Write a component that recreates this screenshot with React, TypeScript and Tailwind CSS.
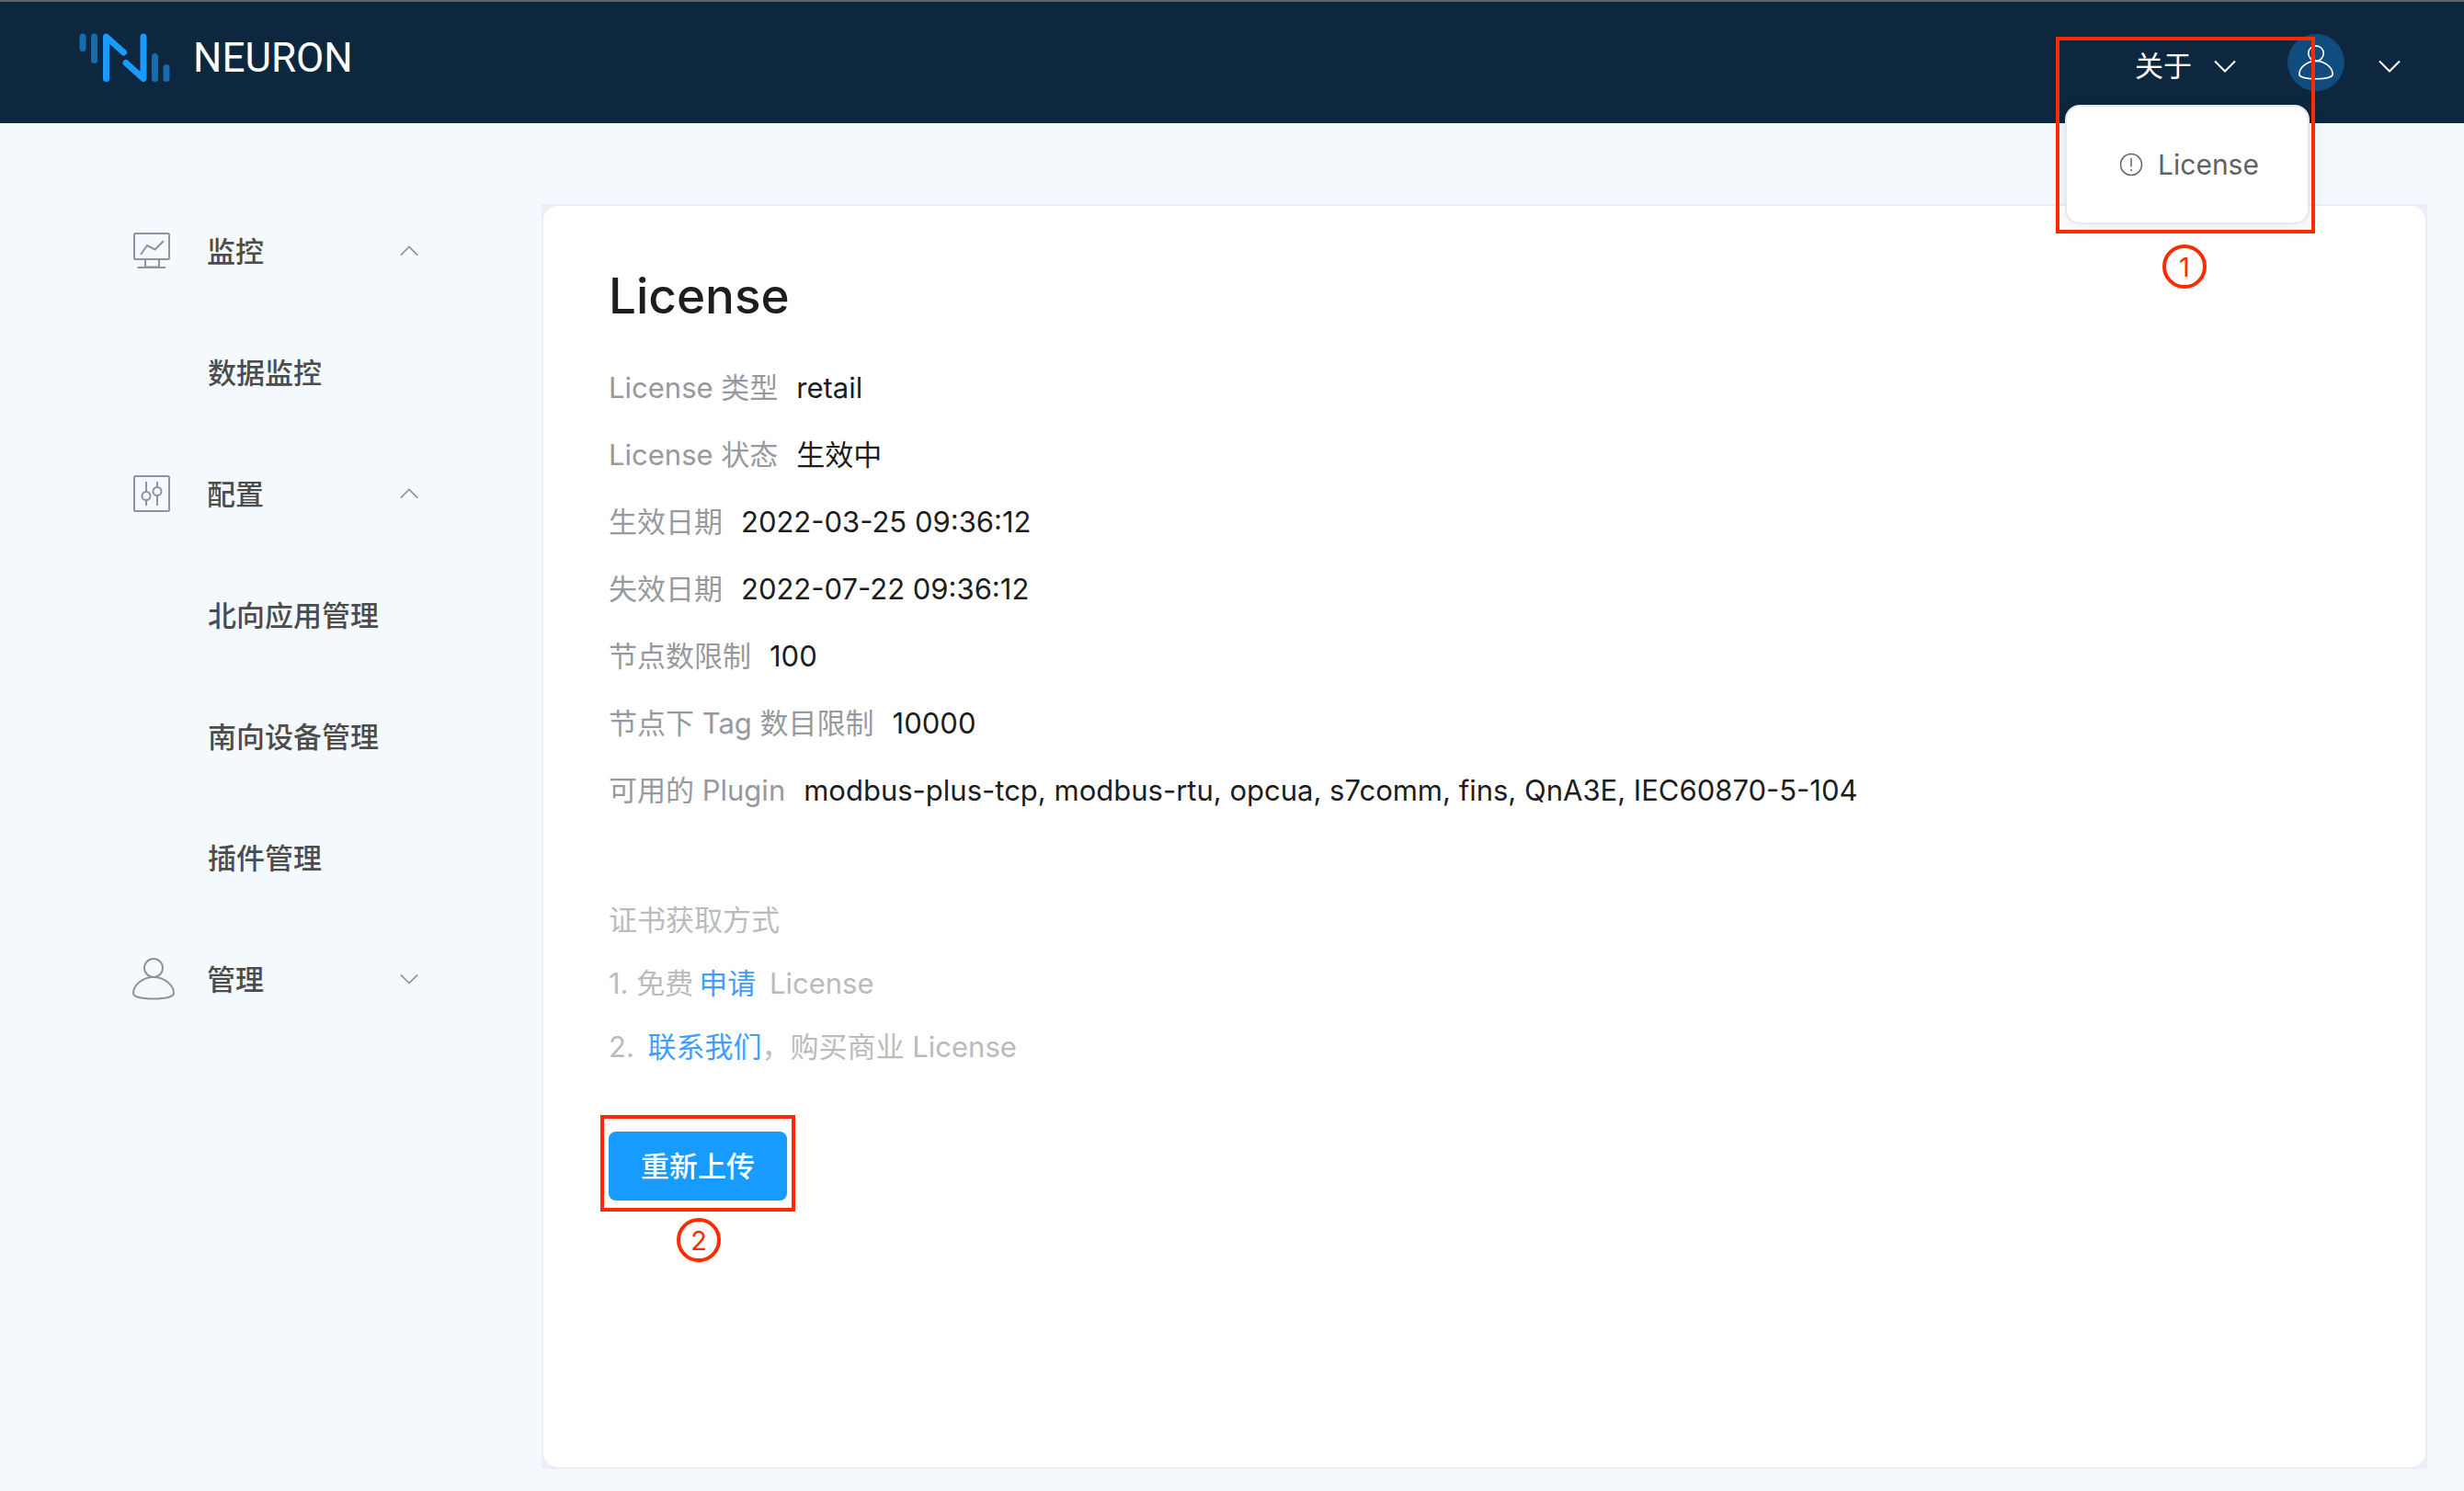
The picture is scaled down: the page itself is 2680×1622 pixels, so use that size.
import type { ReactNode } from "react";

function Chevron({ up = false, className }: { up?: boolean; className: string }) {
  return (
    <svg viewBox="0 0 24 14" fill="none" stroke="currentColor" strokeWidth="2" className={className} aria-hidden="true">
      <path d={up ? "M1 12.5 12 1.5 23 12.5" : "M1 1.5 12 12.5 23 1.5"} />
    </svg>
  );
}

function UserIcon({ className }: { className: string }) {
  return (
    <svg viewBox="0 0 46 46" fill="none" stroke="currentColor" strokeWidth="2" className={className} aria-hidden="true">
      <circle cx="23" cy="11" r="10" />
      <path d="M23 21C35 21 45 30 45 38.500C45 42.500 35 44.500 23 44.500S1 42.500 1 38.500C1 30 11 21 23 21Z" />
    </svg>
  );
}

function MonitorIcon({ className }: { className: string }) {
  return (
    <svg viewBox="0 0 42 42" fill="none" stroke="currentColor" strokeWidth="2" className={className} aria-hidden="true">
      <rect x="2" y="2" width="38" height="28" rx="1.500" />
      <path d="M9 25 16 15 24.500 19.500 34 10M14 30V38.500H29V30M5.500 39H36" />
    </svg>
  );
}

function SlidersIcon({ className }: { className: string }) {
  return (
    <svg viewBox="0 0 42 42" fill="none" stroke="currentColor" strokeWidth="2" className={className} aria-hidden="true">
      <rect x="2" y="2" width="38" height="38" rx="1.500" />
      <path d="M15 8V19M15 28V34M27 8V14M27 23V34" />
      <circle cx="15" cy="23.500" r="4.500" />
      <circle cx="27" cy="18.500" r="4.500" />
    </svg>
  );
}

function Logo() {
  return (
    <svg viewBox="0 0 100 54" fill="none" strokeWidth="7" strokeLinecap="round" strokeLinejoin="round" className="h-[54px] w-[100px]" aria-hidden="true">
      <g stroke="#126db3">
        <path d="M4 4V16.500M16.500 4V29.500M82.500 25.500V49.500M95 37.500V49.500" />
      </g>
      <g stroke="#189bff">
        <path d="M29.500 49.500V4L48.500 21M51 32.500 70 49.500V4" />
      </g>
    </svg>
  );
}

function Marker({ n, className }: { n: number; className: string }) {
  return (
    <span className={`absolute flex size-12 items-center justify-center rounded-full border-4 border-[#ff2a00] text-[29px] leading-none text-[#ff2a00] ${className}`}>
      {n}
    </span>
  );
}

function MenuGroup({ icon, label, open = false, items = [] }: { icon: ReactNode; label: string; open?: boolean; items?: string[] }) {
  return (
    <li>
      <button type="button" aria-expanded={open} className="flex h-[132px] w-full items-center text-[#909399]">
        <span className="w-[81px]">{icon}</span>
        <span className="flex-1 pt-[2px] text-left font-medium text-[#4c4c4c]">{label}</span>
        <Chevron up={open} className="h-3 w-5" />
      </button>
      {items.length > 0 && (
        <ul>
          {items.map((item) => (
            <li key={item}>
              <a href="#" className="flex h-[132px] items-center pt-[2px] pl-[82px] font-medium text-[#4c4c4c]">
                {item}
              </a>
            </li>
          ))}
        </ul>
      )}
    </li>
  );
}

const details = [
  ["License 类型", "retail"],
  ["License 状态", "生效中"],
  ["生效日期", "2022-03-25 09:36:12"],
  ["失效日期", "2022-07-22 09:36:12"],
  ["节点数限制", "100"],
  ["节点下 Tag 数目限制", "10000"],
  ["可用的 Plugin", "modbus-plus-tcp, modbus-rtu, opcua, s7comm, fins, QnA3E, IEC60870-5-104"],
];

export default function App() {
  return (
    <div className="flex min-h-screen flex-col bg-[#f4f9fd] font-['Inter','Noto_Sans_CJK_SC',sans-serif] text-[31px] leading-[46px] text-[#1d1d1d]">
      <header className="flex h-[134px] items-center justify-between border-t-2 border-[#626166] bg-[#0c273e] pr-[69px] pl-[86px] text-white">
        <a href="#" className="flex items-center gap-6 pb-[10px]">
          <Logo />
          <span className="font-['Roboto',sans-serif] text-[44px] leading-none">NEURON</span>
        </a>
        <nav className="flex items-center">
          <div className="relative">
            <button type="button" aria-expanded="true" className="flex items-center gap-6 pt-2">
              关于
              <Chevron className="h-[14px] w-6" />
            </button>
            <div className="absolute top-[73px] -left-[76px] z-10 flex h-[130px] w-[266px] items-center justify-center rounded-2xl border-2 border-[#e4e7ed] bg-white pl-1 shadow-[0_4px_24px_rgba(0,0,0,0.08)]">
              <a href="#" className="flex items-center gap-4 text-[30px] text-[#606266]">
                <svg viewBox="0 0 26 26" fill="none" stroke="currentColor" strokeWidth="1.500" className="size-[26px]" aria-hidden="true">
                  <circle cx="13" cy="13" r="11.500" />
                  <path d="M13 6V15.500M13 18V20" />
                </svg>
                License
              </a>
            </div>
            <span className="pointer-events-none absolute -top-px -left-[86px] z-20 h-[214px] w-[282px] border-4 border-[#ff2a00]" />
            <Marker n={1} className="top-[225px] left-[30px] z-20" />
          </div>
          <button type="button" aria-label="用户" className="ml-14 flex items-center gap-[37px]">
            <span className="flex size-[62px] items-center justify-center rounded-full bg-[#104c7d]">
              <UserIcon className="size-[38px]" />
            </span>
            <span className="pt-2">
              <Chevron className="h-[14px] w-6" />
            </span>
          </button>
        </nav>
      </header>

      <div className="flex flex-1 pr-10 pb-6">
        <aside className="w-[589px] shrink-0 pt-[73px] pr-[134px] pl-[144px]">
          <ul>
            <MenuGroup icon={<MonitorIcon className="size-[42px]" />} label="监控" open items={["数据监控"]} />
            <MenuGroup icon={<SlidersIcon className="size-[42px]" />} label="配置" open items={["北向应用管理", "南向设备管理", "插件管理"]} />
            <MenuGroup icon={<UserIcon className="size-[46px]" />} label="管理" />
          </ul>
        </aside>

        <main className="mt-[88px] flex min-w-0 flex-1 bg-[#ebeef5] p-[2px]">
          <section className="flex-1 rounded-2xl bg-white px-[71px] pt-[66px]">
            <h1 className="text-[53px] leading-[64px] font-medium">License</h1>
            <dl className="mt-[31px]">
              {details.map(([label, value]) => (
                <div key={label} className="flex h-[73px] items-center gap-5">
                  <dt className="text-[#96999d]">{label}</dt>
                  <dd>{value}</dd>
                </div>
              ))}
            </dl>
            <div className="mt-[70px] leading-[69px] text-[#bbbbbb]">
              <p>证书获取方式</p>
              <p>
                1. 免费<a href="#" className="mx-[6px] text-[#409eff]">申请</a> License
              </p>
              <p>
                2. <a href="#" className="ml-[6px] text-[#409eff]">联系我们</a>，购买商业 License
              </p>
            </div>
            <div className="relative mt-[58px] w-fit">
              <button type="button" className="flex h-[75px] items-center rounded-lg bg-[#189bff] px-[35px] font-medium text-white">
                重新上传
              </button>
              <span className="pointer-events-none absolute -inset-x-[9px] -top-[18px] -bottom-3 border-4 border-[#ff2a00]" />
              <Marker n={2} className="top-[94px] left-[74px]" />
            </div>
          </section>
        </main>
      </div>
    </div>
  );
}
